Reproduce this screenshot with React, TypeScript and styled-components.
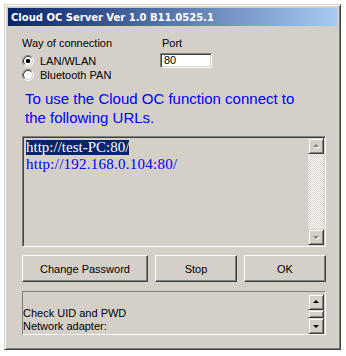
import styled, { createGlobalStyle } from "styled-components";

const GlobalStyle = createGlobalStyle`
  body {
    margin: 0;
    background: #ffffff;
    font-family: "Liberation Sans", Arial, sans-serif;
  }
`;

const Window = styled.div`
  box-sizing: border-box;
  margin: 4px 0 0 4px;
  width: 337px;
  height: 346px;
  padding: 3px;
  background: #d4d0c8;
  border: 1px solid;
  border-color: #d4d0c8 #404040 #404040 #d4d0c8;
  box-shadow: inset 1px 1px #ffffff, inset -1px -1px #808080;
  display: flex;
  flex-direction: column;
`;

const TitleBar = styled.div`
  height: 18px;
  display: flex;
  align-items: center;
  padding-left: 3px;
  background: linear-gradient(to right, #0a246a, #a6caf0);
  color: #ffffff;
  font-family: "DejaVu Sans", Verdana, sans-serif;
  font-weight: bold;
  font-size: 10px;
  white-space: nowrap;
`;

const Body = styled.div`
  padding: 11px 12px 0 14px;
  display: flex;
  flex-direction: column;
  font-size: 11px;
  color: #000000;
`;

const TopRow = styled.div`
  display: flex;
`;

const ConnectionGroup = styled.div`
  width: 138px;
  display: flex;
  flex-direction: column;
`;

const GroupLabel = styled.div`
  height: 13px;
  line-height: 13px;
  margin-bottom: 4px;
`;

const RadioRow = styled.label`
  height: 14px;
  display: flex;
  align-items: center;
  gap: 6px;
  line-height: 13px;
`;

const PortGroup = styled.div`
  display: flex;
  flex-direction: column;
`;

const PortLabel = styled(GroupLabel)`
  padding-left: 2px;
  margin-bottom: 3px;
`;

const PortInput = styled.div`
  box-sizing: border-box;
  width: 52px;
  height: 15px;
  background: #ffffff;
  border: 1px solid;
  border-color: #808080 #ffffff #ffffff #808080;
  box-shadow: inset 1px 1px #404040, inset -1px -1px #d4d0c8;
  padding-left: 3px;
  line-height: 13px;
  font-size: 11px;
`;

const Notice = styled.p`
  margin: 7px 0 0 3px;
  font-size: 15px;
  line-height: 19px;
  color: #0000ff;
`;

const UrlBox = styled.div`
  box-sizing: border-box;
  margin-top: 9px;
  width: 304px;
  height: 111px;
  border: 1px solid;
  border-color: #808080 #ffffff #ffffff #808080;
  box-shadow: inset 1px 1px #404040, inset -1px -1px #d4d0c8;
  padding: 1px;
  display: flex;
`;

const UrlList = styled.div`
  flex: 1;
  padding: 2px 0 0 2px;
  display: flex;
  flex-direction: column;
  align-items: flex-start;
  font-family: "Liberation Serif", "Times New Roman", serif;
  font-size: 15px;
`;

const UrlLine = styled.span<{ $selected?: boolean; $spread?: number }>`
  height: 15px;
  line-height: 15px;
  margin-bottom: 2px;
  letter-spacing: ${(p) => p.$spread ?? 0}px;
  color: ${(p) => (p.$selected ? "#ffffff" : "#0000ff")};
  background: ${(p) => (p.$selected ? "#0a246a" : "transparent")};
`;

const ScrollBar = styled.div<{ $pad?: string }>`
  width: 16px;
  display: flex;
  flex-direction: column;
  padding: ${(p) => p.$pad ?? "0"};
`;

const ScrollButton = styled.div`
  box-sizing: border-box;
  width: 16px;
  height: 16px;
  flex: none;
  background: #d4d0c8;
  border: 1px solid;
  border-color: #d4d0c8 #404040 #404040 #d4d0c8;
  box-shadow: inset 1px 1px #ffffff, inset -1px -1px #808080;
  display: flex;
  align-items: center;
  justify-content: center;
`;

const ScrollThumb = styled(ScrollButton)`
  height: 8px;
`;

const ScrollTrack = styled.div<{ $dither?: boolean }>`
  flex: 1;
  background: ${(p) =>
    p.$dither
      ? "repeating-conic-gradient(#ffffff 0 25%, #d4d0c8 0 50%) 0 0 / 2px 2px"
      : "#d4d0c8"};
`;

const ButtonRow = styled.div`
  margin-top: 8px;
  display: flex;
  gap: 7px;
  width: 304px;
`;

const Button = styled.button<{ $w: number }>`
  box-sizing: border-box;
  width: ${(p) => p.$w}px;
  height: 27px;
  padding: 0;
  background: #d4d0c8;
  border: 1px solid;
  border-color: #ffffff #404040 #404040 #ffffff;
  box-shadow: inset -1px -1px #808080, inset 1px 1px #d4d0c8;
  font-family: "Liberation Sans", Arial, sans-serif;
  font-size: 11px;
  color: #000000;
`;

const LogBox = styled.div`
  box-sizing: border-box;
  margin-top: 9px;
  width: 304px;
  height: 44px;
  border: 1px solid;
  border-color: #808080 #ffffff #ffffff #808080;
  display: flex;
`;

const LogText = styled.div`
  flex: 1;
  display: flex;
  flex-direction: column;
  justify-content: flex-end;
  padding: 0 0 1px 0;
  font-size: 11px;
  line-height: 13px;
`;

const Radio = ({ checked }: { checked?: boolean }) => (
  <svg width="12" height="12" viewBox="0 0 12 12">
    <circle cx="6" cy="6" r="4.2" fill="#ffffff" />
    <path d="M2.11 9.89 A5.5 5.5 0 0 1 9.89 2.11" fill="none" stroke="#808080" />
    <path d="M9.89 2.11 A5.5 5.5 0 0 1 2.11 9.89" fill="none" stroke="#ffffff" />
    <path d="M2.82 9.18 A4.5 4.5 0 0 1 9.18 2.82" fill="none" stroke="#404040" />
    <path d="M9.18 2.82 A4.5 4.5 0 0 1 2.82 9.18" fill="none" stroke="#d4d0c8" />
    {checked && <rect x="4" y="4" width="4" height="4" rx="1.2" fill="#000000" />}
  </svg>
);

const Arrow = ({ down, disabled }: { down?: boolean; disabled?: boolean }) => {
  const d = down ? "M4 4 L10 4 L7 7 Z" : "M4 6 L7 3 L10 6 Z";
  return (
    <svg width="14" height="10" viewBox="0 0 14 10">
      {disabled && <path d={d} fill="#ffffff" transform="translate(1 1)" />}
      <path d={d} fill={disabled ? "#808080" : "#000000"} />
    </svg>
  );
};

export default function App() {
  return (
    <>
      <GlobalStyle />
      <Window>
        <TitleBar>Cloud OC Server Ver 1.0 B11.0525.1</TitleBar>
        <Body>
          <TopRow>
            <ConnectionGroup>
              <GroupLabel>Way of connection</GroupLabel>
              <RadioRow>
                <Radio checked />
                LAN/WLAN
              </RadioRow>
              <RadioRow>
                <Radio />
                Bluetooth PAN
              </RadioRow>
            </ConnectionGroup>
            <PortGroup>
              <PortLabel>Port</PortLabel>
              <PortInput>80</PortInput>
            </PortGroup>
          </TopRow>

          <Notice>
            To use the Cloud OC function connect to
            <br />
            the following URLs.
          </Notice>

          <UrlBox>
            <UrlList>
              <UrlLine $selected>http://test-PC:80/</UrlLine>
              <UrlLine $spread={0.25}>http://192.168.0.104:80/</UrlLine>
            </UrlList>
            <ScrollBar>
              <ScrollButton>
                <Arrow disabled />
              </ScrollButton>
              <ScrollTrack $dither />
              <ScrollButton>
                <Arrow down disabled />
              </ScrollButton>
            </ScrollBar>
          </UrlBox>

          <ButtonRow>
            <Button $w={126}>Change Password</Button>
            <Button $w={82}>Stop</Button>
            <Button $w={82}>OK</Button>
          </ButtonRow>

          <LogBox>
            <LogText>
              <div>Check UID and PWD</div>
              <div>Network adapter:</div>
            </LogText>
            <ScrollBar $pad="2px 1px 1px 0">
              <ScrollButton>
                <Arrow />
              </ScrollButton>
              <ScrollThumb />
              <ScrollTrack />
              <ScrollButton>
                <Arrow down />
              </ScrollButton>
            </ScrollBar>
          </LogBox>
        </Body>
      </Window>
    </>
  );
}
